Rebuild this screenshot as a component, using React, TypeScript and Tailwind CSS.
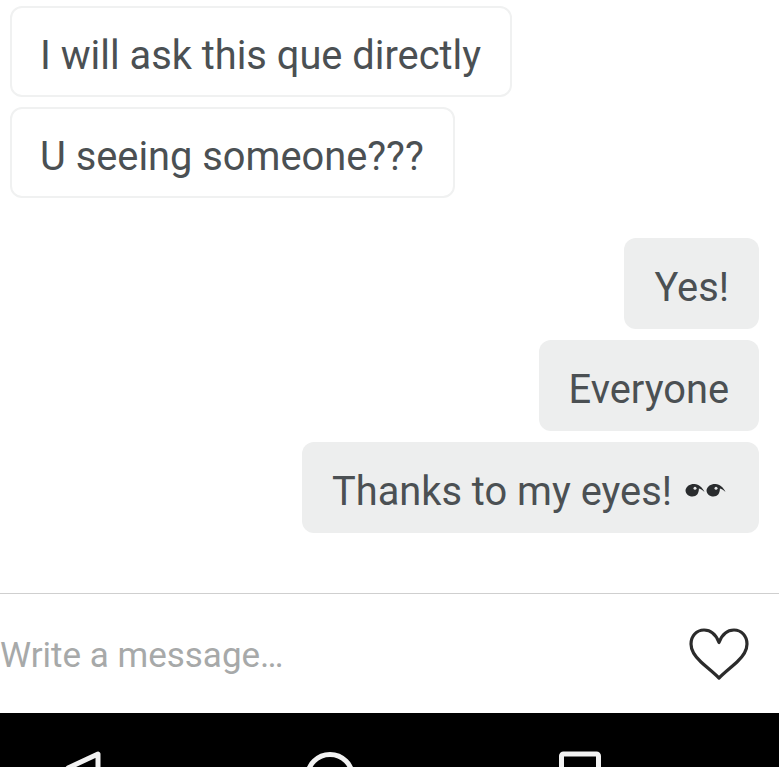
const font = { fontFamily: "Roboto, sans-serif" };

function Eye({ flip }: { flip?: boolean }) {
  return (
    <svg width="20" height="14" viewBox="0 0 20 14" className={flip ? "ml-[1px]" : ""}>
      <path d="M.5 7C1.500 3 5 .8 9.500 1c4.500.2 8 3.500 10 8-1.800-1.900-3.700-3.100-5.600-3.500C14 10.500 11.500 13.500 7.500 13.500 3.500 13.500.5 11 .5 7Z" fill="#2a2c2e" />
      <circle cx="10" cy="5.300" r="1.500" fill="#e6e8e8" />
    </svg>
  );
}

function Left({ text }: { text: string }) {
  return (
    <div className="self-start h-[91px] flex items-center pl-[28px] pr-[29px] pt-[8px] bg-white border-2 border-[#f0f1f1] rounded-[12px] text-[39.8px] text-[#4b5053] whitespace-nowrap">
      {text}
    </div>
  );
}

function Right({ children }: { children: React.ReactNode }) {
  return (
    <div className="self-end h-[91px] flex items-center px-[30px] pt-[8px] bg-[#edeeee] rounded-[12px] text-[39.8px] text-[#4b5053] whitespace-nowrap">
      {children}
    </div>
  );
}

export default function App() {
  return (
    <div className="w-[779px] h-[767px] overflow-hidden bg-white flex flex-col" style={font}>
      <div className="h-[593px] px-[10px] pr-[20px] pt-[6px] flex flex-col">
        <div className="flex flex-col gap-[10px]">
          <Left text="I will ask this que directly" />
          <Left text="U seeing someone???" />
        </div>
        <div className="flex flex-col gap-[11px] mt-[40px]">
          <Right>Yes!</Right>
          <Right>Everyone</Right>
          <Right>
            Thanks to my eyes!
            <span className="flex ml-[13px] mr-[3px] mt-[-4px]">
              <Eye />
              <Eye flip />
            </span>
          </Right>
        </div>
      </div>
      <div className="h-[120px] border-t border-[#cfcfcf] flex items-center justify-between pr-[30px]">
        <span className="text-[35px] text-[#a7a9a9] pt-[6px]">Write a message…</span>
        <svg width="60" height="54" viewBox="0 0 60 54" fill="none">
          <path
            d="M30 15.500C27 7.500 21.500 3 15 3 7.500 3 2 9 2 17c0 6.500 3.500 12 10 18 6 5.500 12.500 10.500 18 16 5.500-5.500 12-10.500 18-16 6.500-6 10-11.500 10-18 0-8-5.500-14-13-14-6.500 0-12 4.500-15 12.500Z"
            stroke="#2b2b2b"
            strokeWidth="3.2"
            strokeLinejoin="round"
          />
        </svg>
      </div>
      <div className="flex-1 bg-black relative overflow-hidden">
        <svg className="absolute left-0 top-0" width="779" height="54" viewBox="0 0 779 54" fill="none" stroke="#f2f2f2" strokeWidth="5">
          <path d="M98 41 L98 73 L68 55 Z" strokeLinejoin="round" />
          <circle cx="330" cy="64" r="22.500" />
          <rect x="561.500" y="41" width="37" height="40" rx="2" />
        </svg>
      </div>
    </div>
  );
}
